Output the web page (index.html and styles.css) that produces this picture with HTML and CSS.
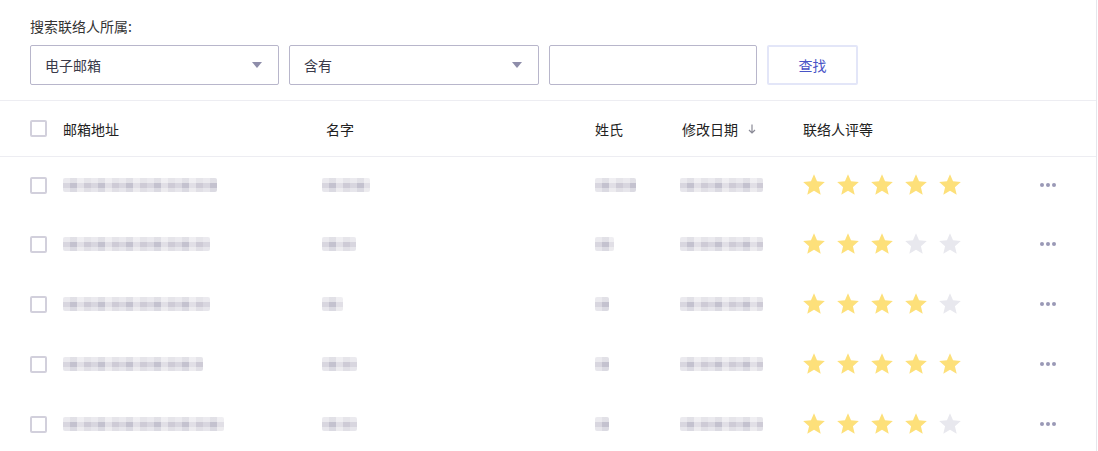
FILE: index.html
```html
<!DOCTYPE html>
<html lang="zh-CN">
<head>
    <meta charset="UTF-8">
    <title>联络人</title>
    <link rel="stylesheet" href="styles.css">
</head>
<body>

<div class="page">
    <!-- 搜索区 -->
    <div class="search">
        <div class="search-label">搜索联络人所属:</div>
        <div class="search-row">
            <div class="select select-field">
                <span>电子邮箱</span>
                <i class="caret"></i>
            </div>
            <div class="select select-op">
                <span>含有</span>
                <i class="caret"></i>
            </div>
            <input class="search-input" type="text">
            <button class="search-btn">查找</button>
        </div>
    </div>

    <!-- 列表 -->
    <div class="table">
        <div class="row head">
            <span class="check"></span>
            <span>邮箱地址</span>
            <span>名字</span>
            <span>姓氏</span>
            <span class="sortable">修改日期
                <svg class="sort" viewBox="0 0 8 10" width="8" height="10"><path d="M4 0.5V9M1 6l3 3 3-3" fill="none" stroke="#8a8a96" stroke-width="1.2"/></svg>
            </span>
            <span>联络人评等</span>
            <span></span>
        </div>

        <div class="row">
            <span class="check"></span>
            <span><i class="blur" style="width:154px"></i></span>
            <span class="shift-name"><i class="blur" style="width:48px"></i></span>
            <span><i class="blur" style="width:41px"></i></span>
            <span class="shift-date"><i class="blur" style="width:83px"></i></span>
            <span class="stars" data-rate="5"></span>
            <span class="more"><b></b><b></b><b></b></span>
        </div>
        <div class="row">
            <span class="check"></span>
            <span><i class="blur" style="width:147px"></i></span>
            <span class="shift-name"><i class="blur" style="width:34px"></i></span>
            <span><i class="blur" style="width:19px"></i></span>
            <span class="shift-date"><i class="blur" style="width:83px"></i></span>
            <span class="stars" data-rate="3"></span>
            <span class="more"><b></b><b></b><b></b></span>
        </div>
        <div class="row">
            <span class="check"></span>
            <span><i class="blur" style="width:147px"></i></span>
            <span class="shift-name"><i class="blur" style="width:21px"></i></span>
            <span><i class="blur" style="width:14px"></i></span>
            <span class="shift-date"><i class="blur" style="width:83px"></i></span>
            <span class="stars" data-rate="4"></span>
            <span class="more"><b></b><b></b><b></b></span>
        </div>
        <div class="row">
            <span class="check"></span>
            <span><i class="blur" style="width:140px"></i></span>
            <span class="shift-name"><i class="blur" style="width:35px"></i></span>
            <span><i class="blur" style="width:14px"></i></span>
            <span class="shift-date"><i class="blur" style="width:83px"></i></span>
            <span class="stars" data-rate="5"></span>
            <span class="more"><b></b><b></b><b></b></span>
        </div>
        <div class="row">
            <span class="check"></span>
            <span><i class="blur" style="width:161px"></i></span>
            <span class="shift-name"><i class="blur" style="width:35px"></i></span>
            <span><i class="blur" style="width:14px"></i></span>
            <span class="shift-date"><i class="blur" style="width:83px"></i></span>
            <span class="stars" data-rate="4"></span>
            <span class="more"><b></b><b></b><b></b></span>
        </div>
    </div>
</div>

<script>
    // 评等星星
    const star = '<svg viewBox="0 0 24 24" width="26" height="26"><path d="M12 17.27L18.18 21l-1.64-7.03L22 9.24l-7.19-.61L12 2 9.19 8.63 2 9.24l5.46 4.73L5.82 21z"/></svg>';
    document.querySelectorAll(".stars").forEach(function (el) {
        const rate = Number(el.dataset.rate);
        let html = "";
        for (let i = 0; i < 5; i++) {
            html += '<span class="star' + (i < rate ? " on" : "") + '">' + star + '</span>';
        }
        el.innerHTML = html;
    });
</script>

</body>
</html>
```

FILE: styles.css
```css
/* 通用 */
body {
    margin: 0;
    font-family: "Noto Sans CJK SC", "Liberation Sans", sans-serif;
    font-size: 14px;
    color: #333;
    background: #fff;
}

.page {
    width: 1096px;
    height: 451px;
    border-right: 1px solid #e6e6ec;
    overflow: hidden;
}

/* 搜索区 */
.search {
    padding: 16px 30px 15px;
    border-bottom: 1px solid #ededf2;
}

.search-label {
    line-height: 20px;
    color: #333;
}

.search-row {
    display: flex;
    gap: 10px;
    margin-top: 9px;
}

.select {
    box-sizing: border-box;
    height: 40px;
    border: 1px solid #b8b6cb;
    border-radius: 2px;
    display: flex;
    align-items: center;
    justify-content: space-between;
    padding: 0 16px 0 14px;
    color: #3a3a4a;
}

.select-field { width: 249px; }
.select-op { width: 250px; }

.caret {
    width: 0;
    height: 0;
    border-left: 5px solid transparent;
    border-right: 5px solid transparent;
    border-top: 6px solid #8e8daa;
}

.search-input {
    box-sizing: border-box;
    width: 208px;
    height: 40px;
    border: 1px solid #b8b6cb;
    border-radius: 2px;
    margin: 0;
}

.search-btn {
    box-sizing: border-box;
    width: 91px;
    height: 40px;
    background: #fff;
    border: 2px solid #e3e6f8;
    border-radius: 2px;
    color: #4853c6;
    font-family: inherit;
    font-size: 14px;
    margin: 0;
}

/* 列表 */
.row {
    display: grid;
    grid-template-columns: 16px 280px 269px 87px 121px 237px 40px;
    align-items: center;
    padding-left: 30px;
}

.row > span:nth-child(2) { padding-left: 17px; }

.head {
    height: 55px;
    border-bottom: 1px solid #ededf2;
    color: #222;
}

.row:not(.head) {
    height: 58px;
    padding-bottom: 2px;
}

.row:nth-child(2) {
    height: 56px;
}

.shift-name { margin-left: -4px; }
.shift-date { margin-left: -2px; }

.check {
    box-sizing: border-box;
    width: 17px;
    height: 17px;
    border: 2px solid #d2d0dc;
    border-radius: 2px;
}

.sortable {
    display: flex;
    align-items: center;
}

.sort {
    margin-left: 10px;
    margin-top: 1px;
}

/* 打码的文字 */
.blur {
    display: block;
    height: 14px;
    border-radius: 2px;
    background:
        linear-gradient(to bottom, rgba(255,255,255,0.5) 0 5px, transparent 5px 10px, rgba(255,255,255,0.4) 10px),
        repeating-linear-gradient(to right, #cfcdd8 0 7px, #b6b4c4 7px 14px, #dad8e0 14px 21px, #c2bfcd 21px 28px);
    opacity: 0.8;
}

/* 星星 */
.stars {
    display: flex;
    gap: 8px;
    margin-left: -2px;
}

.star {
    display: block;
    height: 26px;
}

.star svg {
    display: block;
    fill: #e8e8ee;
}

.star.on svg {
    fill: #fde07a;
}

.more {
    display: flex;
    gap: 2px;
}

.more b {
    width: 4px;
    height: 4px;
    border-radius: 50%;
    background: #9a99b6;
}
```
